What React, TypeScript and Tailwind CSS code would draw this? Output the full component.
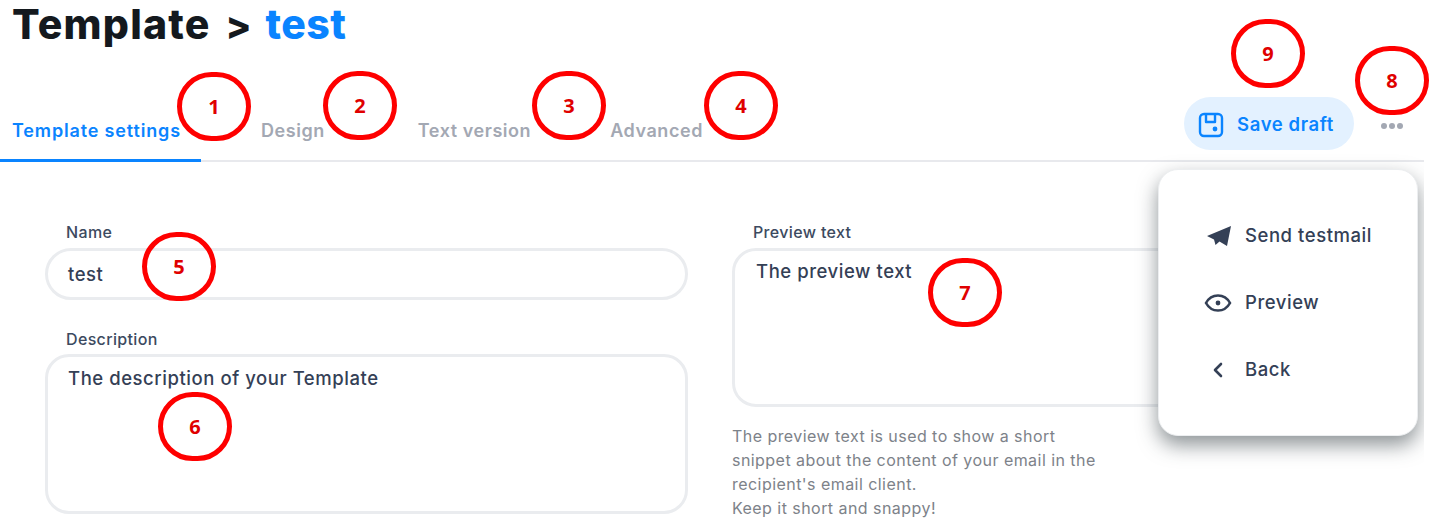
import React from "react";

const font = { fontFamily: '"Inter", "Noto Sans", sans-serif' };

function Mark({ n, className }: { n: number; className: string }) {
  return (
    <div
      className={`absolute flex h-[69px] w-[74px] items-center justify-center rounded-full border-[5px] border-[#fe0000] text-[20px] font-bold text-[#e00000] ${className}`}
      style={{ fontFamily: '"Open Sans", sans-serif' }}
    >
      {n}
    </div>
  );
}

function Tab({ label, className }: { label: string; className: string }) {
  return <div className={`text-[18px] font-semibold tracking-[0.55px] text-[#a3a8b3] ${className}`}>{label}</div>;
}

function Send() {
  return (
    <svg width="26" height="22" viewBox="0 0 26 22" fill="#344056">
      <path d="M26 1 2 11 9 14.5 10.5 20 14.5 16.5 22 21Z" />
    </svg>
  );
}

function Eye() {
  return (
    <svg width="28" height="20" viewBox="0 0 28 20" fill="none" stroke="#344056" strokeWidth="2.6">
      <path d="M2 10C5 4.5 9 2.5 14 2.5S23 4.5 26 10C23 15.5 19 17.5 14 17.5S5 15.5 2 10Z" />
      <circle cx="14" cy="10" r="2.4" fill="#344056" stroke="none" />
    </svg>
  );
}

function Back() {
  return (
    <svg width="28" height="20" viewBox="0 0 28 20" fill="none" stroke="#344056" strokeWidth="2.6" strokeLinecap="round" strokeLinejoin="round">
      <path d="M17 4 11 10 17 16" />
    </svg>
  );
}

function MenuItem({ icon, label }: { icon: React.ReactNode; label: string }) {
  return (
    <div className="flex h-[67px] items-center">
      <div className="flex w-[32px] justify-center">{icon}</div>
      <span className="ml-[11px] text-[18.5px] font-medium tracking-[0.55px] text-[#344056]">{label}</span>
    </div>
  );
}

const labelCls = "ml-[21px] h-[20px] text-[16px] leading-[20px] font-medium tracking-[0.35px] text-[#3c4a60]";
const valueCls = "text-[18.5px] leading-[24px] font-medium tracking-[0.55px] text-[#344056]";

export default function App() {
  return (
    <div className="relative h-[519px] w-[1429px] overflow-hidden bg-white" style={font}>
      <div className="relative h-[519px] w-[1424px] overflow-hidden">
        <h1 className="ml-[12px] flex h-[47px] items-baseline text-[41px] leading-[48px] font-extrabold text-[#14191e]">
          <span className="tracking-[1.2px]">Template</span>
          <span className="ml-[15px] text-[38px]">&gt;</span>
          <span className="ml-[14px] tracking-[0.4px] text-[#0a84ff]">test</span>
        </h1>

        <div className="flex h-[115px] items-end border-b-2 border-[#e8e9ed]">
          <div className="relative flex h-full w-full">
            <div className="-mb-[2px] flex w-[201px] items-end self-end border-b-[3px] border-[#0a84ff] pb-[15px] pl-[12px] text-[18px] font-semibold tracking-[0.85px] whitespace-nowrap text-[#0a84ff]">
              Template settings
            </div>
            <div className="flex items-end pb-[16px]">
              <Tab label="Design" className="ml-[60px]" />
              <Tab label="Text version" className="ml-[93px]" />
              <Tab label="Advanced" className="ml-[79px]" />
            </div>
            <div className="ml-auto flex items-center self-end pb-[10px]">
              <button className="flex h-[53px] w-[170px] items-center justify-center gap-[13px] rounded-full bg-[#e3f1ff] pt-[2px] pr-[6px] text-[18.5px] font-semibold tracking-[0.6px] text-[#0a84ff]">
                <svg width="26" height="26" viewBox="0 0 26 26" fill="none" stroke="#0a84ff" strokeWidth="2.4" strokeLinejoin="round">
                  <rect x="2" y="2" width="22" height="22" rx="4" />
                  <path d="M8 2v8h9V2" />
                  <circle cx="17" cy="17" r="2.4" fill="#0a84ff" stroke="none" />
                </svg>
                Save draft
              </button>
              <div className="mt-[4px] mr-[21px] ml-[27px] flex gap-[2px]">
                <span className="h-[6px] w-[6px] rounded-full bg-[#a3a8b3]" />
                <span className="h-[6px] w-[6px] rounded-full bg-[#a3a8b3]" />
                <span className="h-[6px] w-[6px] rounded-full bg-[#a3a8b3]" />
              </div>
            </div>
          </div>
        </div>

        <div className="mt-[60px] ml-[45px] flex gap-[44px]">
          <div className="w-[643px]">
            <div className={labelCls}>Name</div>
            <div className={`mt-[6px] flex h-[52px] items-center rounded-full border-[3px] border-[#eaecef] pl-[20px] ${valueCls}`}>
              test
            </div>
            <div className={`mt-[29px] ${labelCls}`}>Description</div>
            <div className={`mt-[5px] h-[160px] rounded-[24px] border-[3px] border-[#eaecef] pt-[9px] pl-[20px] ${valueCls}`}>
              The description of your Template
            </div>
          </div>
          <div className="w-[643px]">
            <div className={labelCls}>Preview text</div>
            <div className={`mt-[6px] h-[159px] rounded-[24px] border-[3px] border-[#eaecef] pt-[8px] pl-[21px] ${valueCls}`}>
              The preview text
            </div>
            <p className="mt-[17px] w-[372px] text-[16px] leading-[24px] tracking-[0.45px] text-[#7d8289]">
              The preview text is used to show a short snippet about the content of your email in the recipient's email client.
              <br />
              Keep it short and snappy!
            </p>
          </div>
        </div>

        <div className="absolute top-[169px] left-[1158px] flex h-[267px] w-[260px] flex-col justify-center rounded-[20px] border border-[#eceef0] bg-white pl-[43px] shadow-[0_9px_20px_rgba(50,60,65,0.55)]">
          <MenuItem icon={<Send />} label="Send testmail" />
          <MenuItem icon={<Eye />} label="Preview" />
          <MenuItem icon={<Back />} label="Back" />
        </div>
      </div>

      <Mark n={1} className="top-[72px] left-[177px]" />
      <Mark n={2} className="top-[71px] left-[323px]" />
      <Mark n={3} className="top-[71px] left-[532px]" />
      <Mark n={4} className="top-[71px] left-[704px]" />
      <Mark n={5} className="top-[232px] left-[142px]" />
      <Mark n={6} className="top-[392px] left-[158px]" />
      <Mark n={7} className="top-[258px] left-[928px]" />
      <Mark n={8} className="top-[46px] left-[1355px]" />
      <Mark n={9} className="top-[19px] left-[1231px]" />
    </div>
  );
}
